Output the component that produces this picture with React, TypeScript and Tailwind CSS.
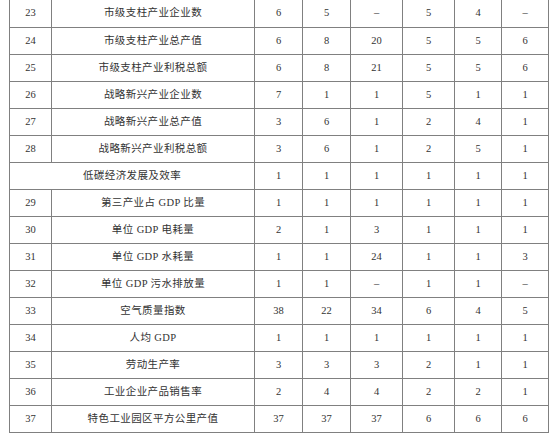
import React from "react";

type Row = { no?: string; name: string; vals: string[] };

const rows: Row[] = [
  { no: "23", name: "市级支柱产业企业数", vals: ["6", "5", "–", "5", "4", "–"] },
  { no: "24", name: "市级支柱产业总产值", vals: ["6", "8", "20", "5", "5", "6"] },
  { no: "25", name: "市级支柱产业利税总额", vals: ["6", "8", "21", "5", "5", "6"] },
  { no: "26", name: "战略新兴产业企业数", vals: ["7", "1", "1", "5", "1", "1"] },
  { no: "27", name: "战略新兴产业总产值", vals: ["3", "6", "1", "2", "4", "1"] },
  { no: "28", name: "战略新兴产业利税总额", vals: ["3", "6", "1", "2", "5", "1"] },
  { name: "低碳经济发展及效率", vals: ["1", "1", "1", "1", "1", "1"] },
  { no: "29", name: "第三产业占 GDP 比量", vals: ["1", "1", "1", "1", "1", "1"] },
  { no: "30", name: "单位 GDP 电耗量", vals: ["2", "1", "3", "1", "1", "1"] },
  { no: "31", name: "单位 GDP 水耗量", vals: ["1", "1", "24", "1", "1", "3"] },
  { no: "32", name: "单位 GDP 污水排放量", vals: ["1", "1", "–", "1", "1", "–"] },
  { no: "33", name: "空气质量指数", vals: ["38", "22", "34", "6", "4", "5"] },
  { no: "34", name: "人均 GDP", vals: ["1", "1", "1", "1", "1", "1"] },
  { no: "35", name: "劳动生产率", vals: ["3", "3", "3", "2", "1", "1"] },
  { no: "36", name: "工业企业产品销售率", vals: ["2", "4", "4", "2", "2", "1"] },
  { no: "37", name: "特色工业园区平方公里产值", vals: ["37", "37", "37", "6", "6", "6"] },
];

const widths = ["w-[42px]", "w-[203px]", "w-[48px]", "w-[48px]", "w-[52px]", "w-[52px]", "w-[47px]", "w-[47px]"];

const cell = "h-[27px] p-0 text-center align-middle border border-[#808080]";

export default function App() {
  return (
    <div
      className="w-[557px] h-[440px] bg-white overflow-hidden pl-[9px] text-[#333333] text-[10.5px]"
      style={{ fontFamily: '"Liberation Serif", "Noto Sans CJK SC", serif' }}
    >
      <table className="border-collapse table-fixed w-[540px]">
        <colgroup>
          {widths.map((w, i) => (
            <col key={i} className={w} />
          ))}
        </colgroup>
        <tbody>
          {rows.map((r, ri) => (
            <tr key={ri}>
              {r.no ? (
                <>
                  <td className={`${cell} ${ri === 0 ? "border-t-0" : ""}`}>{r.no}</td>
                  <td className={`${cell} tracking-[0.4px] ${ri === 0 ? "border-t-0" : ""}`}>{r.name}</td>
                </>
              ) : (
                <td colSpan={2} className={`${cell} tracking-[0.4px]`}>
                  {r.name}
                </td>
              )}
              {r.vals.map((v, vi) => (
                <td key={vi} className={`${cell} ${ri === 0 ? "border-t-0" : ""}`}>
                  {v}
                </td>
              ))}
            </tr>
          ))}
        </tbody>
      </table>
    </div>
  );
}
